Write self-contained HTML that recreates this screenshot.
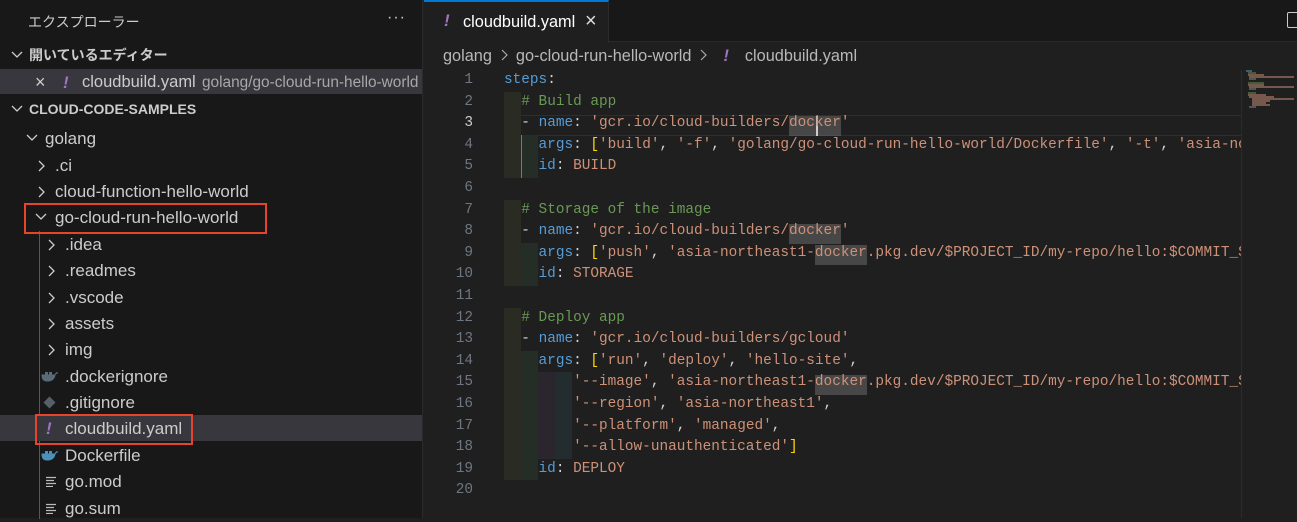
<!DOCTYPE html>
<html><head><meta charset="utf-8">
<style>
*{margin:0;padding:0;box-sizing:border-box}
body{width:1297px;height:518px;overflow:hidden;background:#1f1f1f;position:relative;font-family:"Liberation Sans","Noto Sans CJK JP",sans-serif;color:#cccccc}
.abs{position:absolute}
#side{left:0;top:0;width:423px;height:518px;background:#181818;border-right:1px solid #2b2b2b}
.row{position:absolute;left:0;width:422px;height:26px;line-height:27px;font-size:17px;color:#cccccc;white-space:nowrap}
.chev{position:absolute;top:0;width:12px;height:26px}
.chev svg{position:absolute;top:8px;left:0}
.t{position:absolute;top:0}
#tabs{left:424px;top:0;width:873px;height:42px;background:#181818;border-bottom:1px solid #2b2b2b}
#tab{left:424px;top:0;width:185px;height:43px;background:#1f1f1f;border-top:2px solid #0078d4;border-right:1px solid #2b2b2b}
.code{position:absolute;left:0;font-family:"Liberation Mono","DejaVu Sans Mono",monospace;font-size:14.4px;white-space:pre;height:21.6px;line-height:21.6px}
.ln{position:absolute;width:473px;text-align:right;font-family:"Liberation Mono",monospace;font-size:14.4px;color:#6e7681;height:21.6px;line-height:21.6px;left:0}
.k{color:#569cd6}.s{color:#ce9178}.c{color:#6a9955}.b{color:#ffd700}.p{color:#d4d4d4}
.g{position:absolute;height:21.6px}
.hl{background:rgba(120,120,120,.45)}
.sep{display:inline-block;width:24px;text-align:center}
</style></head><body>

<div id="side" class="abs">
  <div class="abs" style="left:28px;top:12px;font-size:14px;color:#cccccc">エクスプローラー</div>
  <div class="abs" style="left:387px;top:9px;font-size:16px;letter-spacing:1px;color:#cccccc">···</div>
  <div class="row" style="top:42px;font-weight:bold;font-size:14px">
    <span class="chev" style="left:11px"><svg width="12" height="10" viewBox="0 0 12 10"><path d="M1 2 L6 7 L11 2" stroke="#ccc" stroke-width="1.3" fill="none"/></svg></span>
    <span class="t" style="left:29px">開いているエディター</span>
  </div>
  <div class="row" style="top:69px;height:25px;background:#37373d">
    <span class="t" style="left:35px;font-size:18px;color:#ccc">×</span>
    <span class="t" style="left:63px;color:#a074c4;font-style:italic;font-weight:bold">!</span>
    <span class="t" style="left:82px;font-size:16.5px">cloudbuild.yaml</span>
    <span class="t" style="left:202px;font-size:15.4px;color:#a8a8a8">golang/go-cloud-run-hello-world</span>
  </div>
  <div class="row" style="top:96px;font-weight:bold;font-size:14px">
    <span class="chev" style="left:11px"><svg width="12" height="10" viewBox="0 0 12 10"><path d="M1 2 L6 7 L11 2" stroke="#ccc" stroke-width="1.3" fill="none"/></svg></span>
    <span class="t" style="left:29px">CLOUD-CODE-SAMPLES</span>
  </div>
  <div class="row" style="top:125px">
    <span class="chev" style="left:26px"><svg width="12" height="10" viewBox="0 0 12 10"><path d="M1 2 L6 7 L11 2" stroke="#ccc" stroke-width="1.3" fill="none"/></svg></span>
    <span class="t" style="left:45px">golang</span>
  </div>
  <div class="row" style="top:152px"><span class="chev" style="left:37px"><svg width="10" height="12" viewBox="0 0 10 12"><path d="M2 1 L7 6 L2 11" stroke="#ccc" stroke-width="1.3" fill="none"/></svg></span><span class="t" style="left:55px">.ci</span></div>
  <div class="row" style="top:178px"><span class="chev" style="left:37px"><svg width="10" height="12" viewBox="0 0 10 12"><path d="M2 1 L7 6 L2 11" stroke="#ccc" stroke-width="1.3" fill="none"/></svg></span><span class="t" style="left:55px">cloud-function-hello-world</span></div>
  <div class="row" style="top:204px"><span class="chev" style="left:35px"><svg width="12" height="10" viewBox="0 0 12 10"><path d="M1 2 L6 7 L11 2" stroke="#ccc" stroke-width="1.3" fill="none"/></svg></span><span class="t" style="left:55px">go-cloud-run-hello-world</span></div>
  <div class="abs" style="left:39px;top:231px;width:1px;height:288px;background:#585858"></div>
  <div class="row" style="top:231px"><span class="chev" style="left:47px"><svg width="10" height="12" viewBox="0 0 10 12"><path d="M2 1 L7 6 L2 11" stroke="#ccc" stroke-width="1.3" fill="none"/></svg></span><span class="t" style="left:65px">.idea</span></div>
  <div class="row" style="top:257px"><span class="chev" style="left:47px"><svg width="10" height="12" viewBox="0 0 10 12"><path d="M2 1 L7 6 L2 11" stroke="#ccc" stroke-width="1.3" fill="none"/></svg></span><span class="t" style="left:65px">.readmes</span></div>
  <div class="row" style="top:284px"><span class="chev" style="left:47px"><svg width="10" height="12" viewBox="0 0 10 12"><path d="M2 1 L7 6 L2 11" stroke="#ccc" stroke-width="1.3" fill="none"/></svg></span><span class="t" style="left:65px">.vscode</span></div>
  <div class="row" style="top:310px"><span class="chev" style="left:47px"><svg width="10" height="12" viewBox="0 0 10 12"><path d="M2 1 L7 6 L2 11" stroke="#ccc" stroke-width="1.3" fill="none"/></svg></span><span class="t" style="left:65px">assets</span></div>
  <div class="row" style="top:336px"><span class="chev" style="left:47px"><svg width="10" height="12" viewBox="0 0 10 12"><path d="M2 1 L7 6 L2 11" stroke="#ccc" stroke-width="1.3" fill="none"/></svg></span><span class="t" style="left:65px">img</span></div>
  <div class="row" style="top:363px"><svg class="abs" style="left:41px;top:7px" width="18" height="12" viewBox="0 0 18 12"><path d="M1 5 H14 Q13 11 6 11 Q1 11 1 5Z M14 5 Q15 2 17 3" fill="#5a6b78" stroke="#5a6b78"/><rect x="4" y="2" width="3" height="2.5" fill="#5a6b78"/><rect x="8" y="2" width="3" height="2.5" fill="#5a6b78"/></svg><span class="t" style="left:65px">.dockerignore</span></div>
  <div class="row" style="top:389px"><svg class="abs" style="left:43px;top:7px" width="13" height="13" viewBox="0 0 13 13"><path d="M6.5 0.5 L12.5 6.5 L6.5 12.5 L0.5 6.5Z" fill="#55606a"/></svg><span class="t" style="left:65px">.gitignore</span></div>
  <div class="row" style="top:415px;background:#37373d"><span class="t" style="left:46px;color:#a074c4;font-style:italic;font-weight:bold">!</span><span class="t" style="left:65px">cloudbuild.yaml</span></div>
  <div class="row" style="top:442px"><svg class="abs" style="left:41px;top:7px" width="18" height="12" viewBox="0 0 18 12"><path d="M1 5 H14 Q13 11 6 11 Q1 11 1 5Z M14 5 Q15 2 17 3" fill="#4a90b8" stroke="#4a90b8"/><rect x="4" y="2" width="3" height="2.5" fill="#4a90b8"/><rect x="8" y="2" width="3" height="2.5" fill="#4a90b8"/></svg><span class="t" style="left:65px">Dockerfile</span></div>
  <div class="row" style="top:468px"><svg class="abs" style="left:46px;top:8px" width="11" height="11" viewBox="0 0 11 11"><path d="M0 1.5H10M0 4.5H8M0 7.5H10M0 10.5H7" stroke="#bbb" stroke-width="1.2"/></svg><span class="t" style="left:65px">go.mod</span></div>
  <div class="row" style="top:495px"><svg class="abs" style="left:46px;top:8px" width="11" height="11" viewBox="0 0 11 11"><path d="M0 1.5H10M0 4.5H8M0 7.5H10M0 10.5H7" stroke="#bbb" stroke-width="1.2"/></svg><span class="t" style="left:65px">go.sum</span></div>
  <div class="abs" style="left:24px;top:203px;width:243px;height:31px;border:2px solid #e8432c"></div>
  <div class="abs" style="left:35px;top:414px;width:158px;height:31px;border:2px solid #e8432c"></div>
</div>

<div id="tabs" class="abs"></div>
<div id="tab" class="abs">
  <span class="abs" style="left:20px;top:9px;color:#a074c4;font-style:italic;font-weight:bold;font-size:17px">!</span>
  <span class="abs" style="left:39px;top:11px;font-size:16.3px;color:#ffffff">cloudbuild.yaml</span>
  <span class="abs" style="left:161px;top:8px;font-size:20px;color:#ddd">×</span>
</div>
<div class="abs" style="left:1287px;top:12px;width:12px;height:16px;border:1.5px solid #ccc;border-radius:2px"></div>

<div class="abs" style="left:443px;top:47px;font-size:16.3px;color:#b8b8b8;white-space:nowrap">golang<span class="sep"><svg width="8" height="12" viewBox="0 0 8 12"><path d="M2 1 L7 6 L2 11" stroke="#aaa" stroke-width="1.2" fill="none"/></svg></span>go-cloud-run-hello-world<span class="sep"><svg width="8" height="12" viewBox="0 0 8 12"><path d="M2 1 L7 6 L2 11" stroke="#aaa" stroke-width="1.2" fill="none"/></svg></span><span style="color:#a074c4;font-style:italic;font-weight:bold;margin:0 16px 0 8px">!</span>cloudbuild.yaml</div>

<div class="abs" style="left:0;top:70px;width:1297px;height:448px">
  <div class="abs" style="left:504px;top:45px;width:737px;height:21px;border-top:1px solid #2e2e2e;border-bottom:1px solid #2e2e2e"></div>
  <div class="g" style="left:504px;top:21.6px;width:17px;height:86.4px;background:#2a2b22"></div>
  <div class="g" style="left:504px;top:129.6px;width:17px;height:86.4px;background:#2a2b22"></div>
  <div class="g" style="left:504px;top:237.6px;width:17px;height:172.8px;background:#2a2b22"></div>
  <div class="g" style="left:521px;top:64.8px;width:17px;height:43.2px;background:#242d26"></div>
  <div class="g" style="left:521px;top:172.8px;width:17px;height:43.2px;background:#242d26"></div>
  <div class="g" style="left:521px;top:280.8px;width:17px;height:129.6px;background:#242d26"></div>
  <div class="g" style="left:538px;top:302.4px;width:17px;height:86.4px;background:#2b262d"></div>
  <div class="g" style="left:555px;top:302.4px;width:17px;height:86.4px;background:#232c2e"></div>
  <div class="abs" style="left:521px;top:64.8px;width:1px;height:43.2px;background:#777"></div>
  <div class="abs hl" style="left:789px;top:46px;width:52px;height:20px"></div>
  <div class="abs hl" style="left:789px;top:154px;width:52px;height:20px"></div>
  <div class="abs hl" style="left:815px;top:175px;width:52px;height:20px"></div>
  <div class="abs hl" style="left:815px;top:305px;width:52px;height:20px"></div>
  <div class="abs" style="left:816px;top:46px;width:2px;height:20px;background:#ccc"></div>

  <div class="ln" style="top:0">1</div><div class="ln" style="top:21.6px">2</div><div class="ln" style="top:43.2px;color:#ccc">3</div><div class="ln" style="top:64.8px">4</div><div class="ln" style="top:86.4px">5</div><div class="ln" style="top:108px">6</div><div class="ln" style="top:129.6px">7</div><div class="ln" style="top:151.2px">8</div><div class="ln" style="top:172.8px">9</div><div class="ln" style="top:194.4px">10</div><div class="ln" style="top:216px">11</div><div class="ln" style="top:237.6px">12</div><div class="ln" style="top:259.2px">13</div><div class="ln" style="top:280.8px">14</div><div class="ln" style="top:302.4px">15</div><div class="ln" style="top:324px">16</div><div class="ln" style="top:345.6px">17</div><div class="ln" style="top:367.2px">18</div><div class="ln" style="top:388.8px">19</div><div class="ln" style="top:410.4px">20</div>

  <div class="abs" style="left:504px;top:0;width:737px;height:448px;overflow:hidden">
<div class="code" style="top:0"><span class="k">steps</span><span class="p">:</span></div>
<div class="code" style="top:21.6px">  <span class="c"># Build app</span></div>
<div class="code" style="top:43.2px">  <span class="p">- </span><span class="k">name</span><span class="p">: </span><span class="s">'gcr.io/cloud-builders/docker'</span></div>
<div class="code" style="top:64.8px">    <span class="k">args</span><span class="p">: </span><span class="b">[</span><span class="s">'build'</span><span class="p">, </span><span class="s">'-f'</span><span class="p">, </span><span class="s">'golang/go-cloud-run-hello-world/Dockerfile'</span><span class="p">, </span><span class="s">'-t'</span><span class="p">, </span><span class="s">'asia-northeast1'</span></div>
<div class="code" style="top:86.4px">    <span class="k">id</span><span class="p">: </span><span class="s">BUILD</span></div>
<div class="code" style="top:129.6px">  <span class="c"># Storage of the image</span></div>
<div class="code" style="top:151.2px">  <span class="p">- </span><span class="k">name</span><span class="p">: </span><span class="s">'gcr.io/cloud-builders/docker'</span></div>
<div class="code" style="top:172.8px">    <span class="k">args</span><span class="p">: </span><span class="b">[</span><span class="s">'push'</span><span class="p">, </span><span class="s">'asia-northeast1-docker.pkg.dev/$PROJECT_ID/my-repo/hello:$COMMIT_SHA'</span></div>
<div class="code" style="top:194.4px">    <span class="k">id</span><span class="p">: </span><span class="s">STORAGE</span></div>
<div class="code" style="top:237.6px">  <span class="c"># Deploy app</span></div>
<div class="code" style="top:259.2px">  <span class="p">- </span><span class="k">name</span><span class="p">: </span><span class="s">'gcr.io/cloud-builders/gcloud'</span></div>
<div class="code" style="top:280.8px">    <span class="k">args</span><span class="p">: </span><span class="b">[</span><span class="s">'run'</span><span class="p">, </span><span class="s">'deploy'</span><span class="p">, </span><span class="s">'hello-site'</span><span class="p">,</span></div>
<div class="code" style="top:302.4px">        <span class="s">'--image'</span><span class="p">, </span><span class="s">'asia-northeast1-docker.pkg.dev/$PROJECT_ID/my-repo/hello:$COMMIT_SHA'</span></div>
<div class="code" style="top:324px">        <span class="s">'--region'</span><span class="p">, </span><span class="s">'asia-northeast1'</span><span class="p">,</span></div>
<div class="code" style="top:345.6px">        <span class="s">'--platform'</span><span class="p">, </span><span class="s">'managed'</span><span class="p">,</span></div>
<div class="code" style="top:367.2px">        <span class="s">'--allow-unauthenticated'</span><span class="b">]</span></div>
<div class="code" style="top:388.8px">    <span class="k">id</span><span class="p">: </span><span class="s">DEPLOY</span></div>
  </div>
  <div class="abs" style="left:1241px;top:0;width:1px;height:448px;background:#2b2b2b"></div>
  <svg class="abs" style="left:1244px;top:0px" width="50" height="40" viewBox="0 0 50 40">
    <g stroke-width="1">
      <path d="M2 1H8" stroke="#569cd6"/><path d="M4 3H12" stroke="#6a9955"/><path d="M4 5H20" stroke="#ce9178"/><path d="M5 7H50" stroke="#ce9178"/><path d="M5 9H12" stroke="#888"/>
      <path d="M4 13H20" stroke="#6a9955"/><path d="M4 15H20" stroke="#ce9178"/><path d="M5 17H50" stroke="#ce9178"/><path d="M5 19H12" stroke="#888"/>
      <path d="M4 23H12" stroke="#6a9955"/><path d="M4 25H22" stroke="#ce9178"/><path d="M5 27H30" stroke="#ce9178"/><path d="M8 29H50" stroke="#ce9178"/><path d="M8 31H26" stroke="#ce9178"/><path d="M8 33H22" stroke="#ce9178"/><path d="M8 35H26" stroke="#ce9178"/><path d="M5 37H12" stroke="#888"/>
    </g>
  </svg>
</div>
</body></html>
